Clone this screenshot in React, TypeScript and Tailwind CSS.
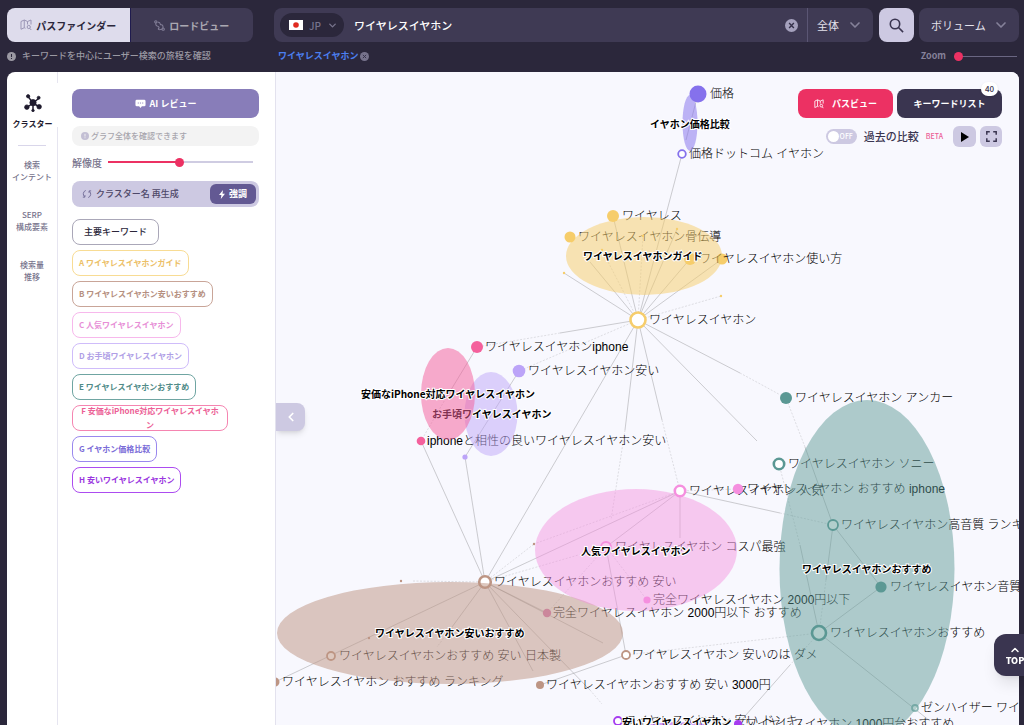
import { useState } from 'react';
import { ChevronDown, ChevronLeft, ChevronUp } from 'lucide-react';

interface GraphNode {
  x: number;
  y: number;
  r: number;
  color: string;
  hollow?: boolean;
  label?: string;
  labelX?: number;
}

interface Cluster {
  name: string;
  cx: number;
  cy: number;
  rx: number;
  ry: number;
  color: string;
  opacity: number;
  labelX: number;
  labelY: number;
}

const chips = [
  { key: 'A', name: 'ワイヤレスイヤホンガイド', className: 'border-[#f8dc94] text-[#ecc067]' },
  { key: 'B', name: 'ワイヤレスイヤホン安いおすすめ', className: 'border-[#c9a598] text-[#b58f80]' },
  { key: 'C', name: '人気ワイヤレスイヤホン', className: 'border-[#f7b8ec] text-[#e78fd6]' },
  { key: 'D', name: 'お手頃ワイヤレスイヤホン', className: 'border-[#cfbcfa] text-[#b09fe6]' },
  { key: 'E', name: 'ワイヤレスイヤホンおすすめ', className: 'border-[#6fa5a2] text-[#508b88]' },
  { key: 'F', name: '安価なiPhone対応ワイヤレスイヤホン', className: 'border-[#f585b1] text-[#ec5f96]' },
  { key: 'G', name: 'イヤホン価格比較', className: 'border-[#9a88ee] text-[#7a6bd8]' },
  { key: 'H', name: '安いワイヤレスイヤホン', className: 'border-[#ac4cf0] text-[#9a35e0]' },
];

const YELLOW = '#f6cd6b';
const BROWN = '#bd9584';
const PINK = '#f58fdf';
const LAVENDER = '#bca4f8';
const TEAL = '#5b9894';
const ROSE = '#f4609c';
const INDIGO = '#8571ec';
const PURPLE = '#a63cf0';

const nodes: GraphNode[] = [
  { x: 698, y: 94, r: 8.5, color: INDIGO, label: '価格', labelX: 710 },
  { x: 682, y: 154, r: 3.8, color: INDIGO, hollow: true, label: '価格ドットコム イヤホン', labelX: 689 },
  { x: 613, y: 216, r: 6, color: YELLOW, label: 'ワイヤレス', labelX: 622 },
  { x: 570, y: 237, r: 5.5, color: YELLOW, label: 'ワイヤレスイヤホン骨伝導', labelX: 578 },
  { x: 690, y: 259, r: 6, color: YELLOW },
  { x: 722, y: 259, r: 5.5, color: YELLOW, label: 'ワイヤレスイヤホン使い方', labelX: 699 },
  { x: 638, y: 320, r: 7.5, color: YELLOW, hollow: true, label: 'ワイヤレスイヤホン', labelX: 649 },
  { x: 564, y: 273, r: 1.2, color: YELLOW },
  { x: 721, y: 296, r: 1.2, color: YELLOW },
  { x: 602, y: 250, r: 1.2, color: YELLOW },
  { x: 677, y: 229, r: 1.2, color: YELLOW },
  { x: 643, y: 236, r: 1.2, color: YELLOW },
  { x: 477, y: 347, r: 6, color: ROSE, label: 'ワイヤレスイヤホンiphone', labelX: 485 },
  { x: 421, y: 441, r: 4.3, color: ROSE, label: 'iphoneと相性の良いワイヤレスイヤホン安い', labelX: 427 },
  { x: 519, y: 371, r: 6.3, color: LAVENDER, label: 'ワイヤレスイヤホン安い', labelX: 528 },
  { x: 465, y: 457, r: 2.6, color: LAVENDER },
  { x: 786, y: 398, r: 6, color: TEAL, label: 'ワイヤレスイヤホン アンカー', labelX: 795 },
  { x: 779, y: 464, r: 5.2, color: TEAL, hollow: true, label: 'ワイヤレスイヤホン ソニー', labelX: 788 },
  { x: 680, y: 491, r: 5.2, color: PINK, hollow: true, label: 'ワイヤレスイヤホン 人気', labelX: 689 },
  { x: 738, y: 489, r: 5.2, color: PINK, label: 'ワイヤレスイヤホン おすすめ iphone', labelX: 747 },
  { x: 833, y: 525, r: 5, color: TEAL, hollow: true, label: 'ワイヤレスイヤホン高音質 ランキング', labelX: 841 },
  { x: 606, y: 547, r: 5, color: PINK, hollow: true, label: 'ワイヤレスイヤホン コスパ最強', labelX: 615 },
  { x: 534, y: 544, r: 1.2, color: BROWN },
  { x: 401, y: 581, r: 1.2, color: BROWN },
  { x: 369, y: 638, r: 1.2, color: BROWN },
  { x: 485, y: 582, r: 5.8, color: BROWN, hollow: true, label: 'ワイヤレスイヤホンおすすめ 安い', labelX: 494 },
  { x: 881, y: 587, r: 5.6, color: TEAL, label: 'ワイヤレスイヤホン音質重視', labelX: 890 },
  { x: 647, y: 600, r: 3.6, color: PINK, label: '完全ワイヤレスイヤホン 2000円以下', labelX: 653 },
  { x: 547, y: 613, r: 4.2, color: '#d977b4', label: '完全ワイヤレスイヤホン 2000円以下 おすすめ', labelX: 553 },
  { x: 819, y: 633, r: 7, color: TEAL, hollow: true, label: 'ワイヤレスイヤホンおすすめ', labelX: 830 },
  { x: 331, y: 656, r: 4, color: BROWN, hollow: true, label: 'ワイヤレスイヤホンおすすめ 安い 日本製', labelX: 339 },
  { x: 626, y: 655, r: 4, color: BROWN, hollow: true, label: 'ワイヤレスイヤホン 安いのは ダメ', labelX: 632 },
  { x: 275, y: 682, r: 4.5, color: BROWN, label: 'ワイヤレスイヤホン おすすめ ランキング', labelX: 282 },
  { x: 540, y: 685, r: 4, color: BROWN, label: 'ワイヤレスイヤホンおすすめ 安い 3000円', labelX: 546 },
  { x: 915, y: 708, r: 3, color: '#8fb9b7', hollow: true, label: 'ゼンハイザー ワイヤレスイヤホン', labelX: 921 },
  { x: 618, y: 721, r: 4, color: PURPLE, hollow: true, label: 'ワイヤレスイヤホン 安い ドンキ', labelX: 624 },
  { x: 738, y: 724, r: 4, color: PURPLE, label: 'ワイヤレスイヤホン 1000円台おすすめ', labelX: 745 },
];

const edges: number[][] = [
  [682, 154, 638, 320], [698, 94, 686, 140],
  [638, 320, 613, 216], [638, 320, 590, 262], [638, 320, 677, 229],
  [638, 320, 690, 259], [638, 320, 722, 259], [638, 320, 564, 273],
  [638, 320, 560, 333], [638, 320, 485, 582], [638, 320, 625, 430],
  [638, 320, 662, 420], [638, 320, 757, 441], [638, 320, 740, 373],
  [477, 347, 446, 398], [519, 371, 465, 457], [421, 441, 485, 582], [465, 457, 485, 582],
  [485, 582, 275, 682], [485, 582, 452, 627], [485, 582, 533, 671], [485, 582, 590, 690],
  [485, 582, 547, 613], [485, 582, 603, 643], [485, 582, 680, 491],
  [680, 491, 606, 547], [680, 491, 680, 538], [680, 491, 780, 513],
  [606, 547, 626, 655], [833, 525, 805, 447], [833, 525, 881, 587], [833, 525, 826, 580],
  [819, 633, 800, 545], [819, 633, 881, 587], [819, 633, 930, 721], [790, 665, 738, 724],
  [626, 655, 540, 685],
];

// Weak relations
const faintEdges: number[][] = [
  [638, 320, 721, 296], [638, 320, 602, 250], [638, 320, 643, 236],
  [560, 333, 477, 347], [638, 320, 519, 371], [625, 430, 611, 520], [662, 420, 680, 491],
  [740, 373, 786, 398], [446, 398, 421, 441], [452, 627, 437, 647], [590, 690, 602, 704],
  [485, 582, 606, 547], [485, 582, 413, 581], [485, 582, 534, 544],
  [680, 491, 534, 544], [780, 513, 833, 525], [680, 491, 738, 489],
  [606, 547, 547, 613], [606, 547, 647, 600], [805, 447, 786, 398], [826, 580, 819, 633],
  [779, 464, 800, 545], [819, 633, 790, 665], [819, 633, 626, 655],
];

// Drawn in this order, so a later cluster covers the name of an earlier one
const clusters: Cluster[] = [
  { name: 'イヤホン価格比較', cx: 690, cy: 123, rx: 7.5, ry: 28, color: INDIGO, opacity: 0.52, labelX: 650, labelY: 128 },
  { name: 'ワイヤレスイヤホンガイド', cx: 644, cy: 256, rx: 78, ry: 39, color: YELLOW, opacity: 0.52, labelX: 583, labelY: 260 },
  { name: 'お手頃ワイヤレスイヤホン', cx: 491, cy: 414, rx: 26.5, ry: 42, color: LAVENDER, opacity: 0.48, labelX: 432, labelY: 418 },
  { name: '安価なiPhone対応ワイヤレスイヤホン', cx: 448, cy: 394, rx: 27, ry: 46, color: ROSE, opacity: 0.52, labelX: 361, labelY: 398 },
  { name: 'ワイヤレスイヤホン安いおすすめ', cx: 450, cy: 633, rx: 173, ry: 51, color: BROWN, opacity: 0.52, labelX: 375, labelY: 637 },
  { name: '人気ワイヤレスイヤホン', cx: 636, cy: 550, rx: 101, ry: 61, color: PINK, opacity: 0.46, labelX: 581, labelY: 555 },
  { name: 'ワイヤレスイヤホンおすすめ', cx: 867, cy: 569, rx: 87.5, ry: 169, color: TEAL, opacity: 0.48, labelX: 802, labelY: 573 },
  { name: '安いワイヤレスイヤホン', cx: 678, cy: 743, rx: 60, ry: 21, color: PURPLE, opacity: 0.5, labelX: 622, labelY: 726 },
];

function MapSearchIcon({ className }: { className: string }) {
  return (
    <svg className={className} viewBox="0 0 24 24" fill="none" stroke="currentColor" strokeWidth="2" strokeLinejoin="round">
      <path d="M11 18.5 8.5 17.5 2 20.5V5l6.500-3 6.500 3L22 2v9" />
      <path d="M8.500 2v15.500M15 5v6" />
      <circle cx="17.500" cy="16" r="3.200" />
      <path d="m19.500 18.500 3 3.500" />
    </svg>
  );
}

function RoadIcon({ className }: { className: string }) {
  return (
    <svg className={className} viewBox="0 0 24 24" fill="none" stroke="currentColor" strokeWidth="2.200" strokeLinecap="round">
      <circle cx="4" cy="4" r="2.600" />
      <circle cx="20" cy="20" r="2.600" />
      <path d="M4 7v3c0 3 3 3.500 5 4s3 3 1 4.500 1 3 3 2.500l4-1" />
      <path d="M9 5c5-1 4 4 5 5s5 0 5.500 3v4" />
    </svg>
  );
}

function ClusterIcon({ className }: { className: string }) {
  return (
    <svg className={className} viewBox="0 0 24 24" fill="currentColor" stroke="currentColor">
      <path d="M12 12 5.500 3.500M12 12l7.500-6M12 12l-8 6M12 12l8 5M12 12v9" strokeWidth="2" />
      <circle cx="12" cy="11.500" r="4.200" />
      <circle cx="5.500" cy="3" r="2.200" />
      <circle cx="19.500" cy="5" r="2" />
      <circle cx="3.800" cy="17.500" r="3" />
      <circle cx="20.200" cy="17" r="3" />
      <circle cx="12" cy="22" r="1.700" />
    </svg>
  );
}

function CloseDot({ className }: { className: string }) {
  return (
    <svg className={className} viewBox="0 0 12 12">
      <circle cx="6" cy="6" r="6" fill="currentColor" />
      <path d="m3.800 3.800 4.400 4.400M8.200 3.800 3.800 8.200" stroke="#35314a" strokeWidth="1.300" />
    </svg>
  );
}

function InfoDot({ className, mark }: { className: string; mark: string }) {
  return (
    <svg className={className} viewBox="0 0 12 12">
      <circle cx="6" cy="6" r="6" fill="currentColor" />
      <path d="M6 2.800v4M6 8v1.400" stroke={mark} strokeWidth="1.400" />
    </svg>
  );
}

function ResetIcon({ className }: { className: string }) {
  return (
    <svg className={className} viewBox="0 0 24 24" fill="none" stroke="currentColor" strokeWidth="2.400">
      <path d="M9 3.500A9 9 0 0 0 6.500 19M15 20.500A9 9 0 0 0 17.500 5" />
      <path d="M2 19.500h5v-5M22 4.500h-5v5" />
    </svg>
  );
}

function Header() {
  const [keyword, setKeyword] = useState('ワイヤレスイヤホン');

  return (
    <header className="pt-2 pr-[5px] pl-[7px]">
      <div className="flex h-[34px]">
        {/* View tabs */}
        <div className="flex w-[246px] shrink-0 overflow-hidden rounded-lg">
          <button className="flex flex-1 items-center justify-center gap-1 bg-[#dedcec] text-[10px] font-bold text-[#2b273b]">
            <MapSearchIcon className="size-3 text-[#9a95b5]" />
            パスファインダー
          </button>
          <button className="flex flex-1 items-center justify-center gap-1 border-l border-[#1f1b4e] bg-[#3f3a54] text-[10px] font-bold text-[#aaa8b2]">
            <RoadIcon className="size-[11px] text-[#85819a]" />
            ロードビュー
          </button>
        </div>

        {/* Search bar */}
        <form className="ml-[21px] flex min-w-0 flex-1 items-center rounded-lg bg-[#3f3a54]" onSubmit={(e) => e.preventDefault()}>
          <label className="relative ml-1.5 flex h-6 w-16 shrink-0 items-center rounded-full bg-[#2b273b] pl-[9px] text-[#77738c]">
            <svg className="h-[10px] w-[14px]" viewBox="0 0 14 10">
              <rect width="14" height="10" fill="#fff" />
              <circle cx="7" cy="5" r="2.800" fill="#e02b20" />
            </svg>
            <select aria-label="国" className="ml-1.5 w-8 appearance-none bg-transparent text-[10px] font-medium outline-none">
              <option>JP</option>
            </select>
            <ChevronDown className="pointer-events-none absolute right-1.5 size-[11px] stroke-3" />
          </label>
          <input
            aria-label="キーワード"
            value={keyword}
            onChange={(e) => setKeyword(e.target.value)}
            className="ml-[10px] min-w-0 flex-1 bg-transparent text-[11px] font-medium text-white outline-none"
          />
          <button type="button" aria-label="クリア" onClick={() => setKeyword('')} className="mr-[9px]">
            <CloseDot className="size-[13px] text-[#a5a1bd]" />
          </button>
          <label className="relative flex h-full w-[66px] shrink-0 items-center border-l border-[#5b5674] text-[#e4e2ec]">
            <select aria-label="範囲" className="w-full appearance-none bg-transparent pl-[9px] text-[11px] outline-none">
              <option>全体</option>
            </select>
            <ChevronDown className="pointer-events-none absolute right-[10px] size-4 stroke-[2.5] text-[#85819a]" />
          </label>
        </form>
        <button aria-label="検索" className="ml-1.5 flex w-[35px] shrink-0 items-center justify-center rounded-lg bg-[#cdc9e2] text-[#3a3550]">
          <svg className="size-[15px]" viewBox="0 0 15 15" fill="none" stroke="currentColor" strokeWidth="1.600">
            <circle cx="6" cy="6" r="4.700" />
            <path d="m9.500 9.500 4.600 4.600" />
          </svg>
        </button>
        <label className="relative ml-[5px] flex w-[100px] shrink-0 items-center rounded-lg bg-[#3f3a54] text-[#e4e2ec]">
          <select aria-label="並び順" className="w-full appearance-none bg-transparent pl-3 text-[11px] outline-none">
            <option>ボリューム</option>
          </select>
          <ChevronDown className="pointer-events-none absolute right-[10px] size-4 stroke-[2.5] text-[#85819a]" />
        </label>
      </div>

      {/* Status row */}
      <div className="flex h-[30px] items-center pb-0.5 text-[9px]">
        <p className="flex w-[271px] shrink-0 items-center gap-1.5 font-medium text-[#9b99a3]">
          <InfoDot className="size-[9px]" mark="#2b273b" />
          キーワードを中心にユーザー検索の旅程を確認
        </p>
        <a href="#keyword" className="font-bold text-[#4b7ff0]">ワイヤレスイヤホン</a>
        <button aria-label="削除" className="ml-[2px]">
          <CloseDot className="size-[9px] text-[#77738c]" />
        </button>
        <label className="ml-auto flex items-center gap-2 font-bold text-[#85819a]">
          Zoom
          <input
            type="range"
            defaultValue={0}
            className="mr-0.5 h-[10px] w-[63px] appearance-none bg-[linear-gradient(#6a6682,#6a6682)] bg-[length:100%_1px] bg-center bg-no-repeat [&::-webkit-slider-thumb]:size-[9px] [&::-webkit-slider-thumb]:appearance-none [&::-webkit-slider-thumb]:rounded-full [&::-webkit-slider-thumb]:bg-[#ec3163]"
          />
        </label>
      </div>
    </header>
  );
}

function Rail() {
  const item = 'flex h-[50px] w-full items-center justify-center text-center text-[8px] leading-3 font-medium text-[#77738c]';

  return (
    <nav className="flex w-[51px] shrink-0 flex-col items-center border-r border-[#e6e5f0] pt-[11px]">
      <button className="relative -mr-px flex h-[44px] w-[51px] flex-col items-center bg-white pt-[11px] text-[8px] font-bold text-[#1f1b2e]">
        <ClusterIcon className="size-[18px] shrink-0" />
        <span className="mt-1.5 leading-3">クラスター</span>
      </button>
      <hr className="mt-[18px] w-7 border-[#d9d6ea]" />
      <button className={item}>検索<br />インテント</button>
      <button className={item}>SERP<br />構成要素</button>
      <button className={item}>検索量<br />推移</button>
    </nav>
  );
}

function ClusterPanel() {
  return (
    <aside className="w-[218px] shrink-0 border-r border-[#e3e2ee] pt-[17px] pr-4 pl-3.5">
      <button className="flex h-[29px] w-full items-center justify-center gap-1 rounded-lg bg-[#887db9] text-[9px] font-bold text-white">
        <svg className="size-[11px]" viewBox="0 0 12 12" fill="currentColor">
          <path d="M2 2h8a1.500 1.500 0 0 1 1.500 1.500v4A1.500 1.500 0 0 1 10 9H7.500L6 10.800 4.500 9H2A1.500 1.500 0 0 1 .5 7.500v-4A1.500 1.500 0 0 1 2 2Z" />
          <path d="M3 5.500h1.200M5.400 5.500h1.200M7.800 5.500H9" stroke="#887db9" strokeWidth="1" />
        </svg>
        AI レビュー
      </button>
      <p className="mt-2 flex h-5 items-center gap-0.5 rounded-lg bg-[#f3f3f3] pl-[9px] text-[8px] font-medium text-[#a7a5ad]">
        <InfoDot className="size-2 text-[#c3bfd4]" mark="#f3f3f3" />
        グラフ全体を確認できます
      </p>
      <label className="mt-2 flex h-4 items-center gap-1.5 text-[10px] font-medium text-[#77738c]">
        解像度
        <input
          type="range"
          defaultValue={49}
          className="mr-1.5 h-[10px] min-w-0 flex-1 appearance-none bg-[linear-gradient(to_right,#ec3163_49%,#cfcce2_49%)] bg-[length:100%_2px] bg-center bg-no-repeat [&::-webkit-slider-thumb]:size-[9px] [&::-webkit-slider-thumb]:appearance-none [&::-webkit-slider-thumb]:rounded-full [&::-webkit-slider-thumb]:bg-[#ec3163]"
        />
      </label>
      <div className="mt-[11px] flex h-[26px] items-center justify-between rounded-lg bg-[#cdc9e2] pr-[3px] pl-[10px] text-[9px] font-bold">
        <button className="flex items-center gap-1 font-medium text-[#4d4768]">
          <ResetIcon className="size-[10px] text-[#77719b]" />
          クラスター名 再生成
        </button>
        <button className="flex h-5 w-[46px] items-center justify-center gap-1 rounded-md bg-[#635993] text-white">
          <svg className="h-[9px] w-[6px]" viewBox="0 0 6 9" fill="currentColor">
            <path d="M4 0 0 5h2.400L1.800 9 6 3.700H3.500Z" />
          </svg>
          強調
        </button>
      </div>

      {/* Cluster chips */}
      <div className="mt-3 flex flex-col items-start gap-[5px] text-[8px] font-bold">
        <button className="h-[26px] rounded-lg border border-[#aaa7b8] px-[11px] text-[9px] font-medium text-[#2b273b]">
          主要キーワード
        </button>
        {chips.map((chip) => (
          <button
            key={chip.key}
            className={`flex h-[26px] max-w-[156px] items-center rounded-lg border px-1.5 leading-[14px] ${chip.className}`}
          >
            <span>
              {chip.key} {chip.name}
            </span>
          </button>
        ))}
      </div>
    </aside>
  );
}

function KeywordGraph() {
  return (
    <svg className="absolute top-0 left-0" width="743" height="653" viewBox="276 72 743 653">
      <g stroke="#86868a" strokeOpacity="0.5" strokeWidth="0.800">
        {edges.map(([x1, y1, x2, y2], index) => (
          <line key={index} x1={x1} y1={y1} x2={x2} y2={y2} />
        ))}
      </g>
      <g stroke="#86868a" strokeOpacity="0.35" strokeWidth="0.700" strokeDasharray="2 1.500">
        {faintEdges.map(([x1, y1, x2, y2], index) => (
          <line key={index} x1={x1} y1={y1} x2={x2} y2={y2} />
        ))}
      </g>

      {nodes.map((node, index) => (
        <g key={index}>
          <circle
            cx={node.x}
            cy={node.y}
            r={node.r}
            fill={node.hollow ? '#fff' : node.color}
            stroke={node.hollow ? node.color : 'none'}
            strokeWidth={node.r > 5 ? 2.6 : 1.8}
          />
          {node.label && (
            <text
              x={node.labelX}
              y={node.y + 4}
              className="fill-black font-['Liberation_Sans','Noto_Sans_CJK_JP',sans-serif] text-[12px] font-light"
            >
              {node.label}
            </text>
          )}
        </g>
      ))}

      {clusters.map((cluster) => (
        <g key={cluster.name}>
          <ellipse
            cx={cluster.cx}
            cy={cluster.cy}
            rx={cluster.rx}
            ry={cluster.ry}
            fill={cluster.color}
            fillOpacity={cluster.opacity}
          />
          <text
            x={cluster.labelX}
            y={cluster.labelY}
            className="fill-black stroke-white stroke-2 text-[10px] font-bold [paint-order:stroke]"
          >
            {cluster.name}
          </text>
        </g>
      ))}
    </svg>
  );
}

function GraphCanvas() {
  return (
    <main className="relative min-w-0 flex-1 overflow-hidden bg-[#f8f8fe]">
      <KeywordGraph />

      <button
        aria-label="パネルを閉じる"
        className="absolute top-[331px] left-0 flex h-7 w-[29px] items-center justify-center rounded-r-lg bg-[#cdc9e2] text-white shadow-md"
      >
        <ChevronLeft className="size-3.5 stroke-3" />
      </button>

      {/* Canvas tools */}
      <div className="absolute top-[17px] right-[17px] flex flex-col items-end gap-2">
        <div className="flex gap-1 text-[9px] font-bold text-white">
          <button className="flex h-[29px] w-[95px] items-center justify-center gap-2 rounded-lg bg-[#ec3163]">
            <MapSearchIcon className="size-[10px]" />
            パスビュー
          </button>
          <button className="relative h-[29px] w-[105px] rounded-lg bg-[#3a3550]">
            キーワードリスト
            <span className="absolute -top-[7px] right-1 rounded-full bg-white px-1 text-[8px] leading-[14px] font-medium text-[#3a3550] shadow">
              40
            </span>
          </button>
        </div>
        <div className="flex items-center">
          <label className="flex items-center gap-[7px] text-[11px] font-medium text-[#3a3550]">
            <span className="relative flex">
              <input
                type="checkbox"
                className="h-[15px] w-[31px] appearance-none rounded-full bg-[#cdc9e2] before:m-[2px] before:block before:size-[11px] before:rounded-full before:bg-white"
              />
              <span className="pointer-events-none absolute top-0 right-1 text-[7px] leading-[15px] text-white">OFF</span>
            </span>
            過去の比較
            <span className="text-[7px] text-[#ec5f96]">BETA</span>
          </label>
          <button aria-label="再生" className="ml-[10px] flex h-[21px] w-[23px] items-center justify-center rounded-md bg-[#cdc9e2]">
            <svg className="h-[10px] w-2" viewBox="0 0 8 10">
              <path d="M0 0v10l8-5Z" />
            </svg>
          </button>
          <button aria-label="全画面" className="ml-1 flex h-[21px] w-[22px] items-center justify-center rounded-md bg-[#cdc9e2] text-[#3a3550]">
            <svg className="size-[11px]" viewBox="0 0 11 11" fill="none" stroke="currentColor" strokeWidth="1.500">
              <path d="M.8 3.800v-3h3M7.200.8h3v3M10.200 7.200v3h-3M3.800 10.200h-3v-3" />
            </svg>
          </button>
        </div>
      </div>
    </main>
  );
}

export default function App() {
  return (
    <div className="flex h-screen flex-col overflow-hidden bg-[#2b273b] font-['Noto_Sans_CJK_JP','Noto_Sans',sans-serif]">
      <Header />
      <div className="mr-[5px] ml-[7px] flex min-h-0 flex-1 overflow-hidden rounded-t-lg bg-white">
        <Rail />
        <ClusterPanel />
        <GraphCanvas />
      </div>
      <a
        href="#top"
        className="fixed -right-3 bottom-[49px] flex h-[42px] w-[42px] flex-col items-center justify-center rounded-xl bg-[#3a3550] text-[9px] leading-[10px] font-black text-white shadow-lg"
      >
        <ChevronUp className="size-3 stroke-3" />
        TOP
      </a>
    </div>
  );
}
